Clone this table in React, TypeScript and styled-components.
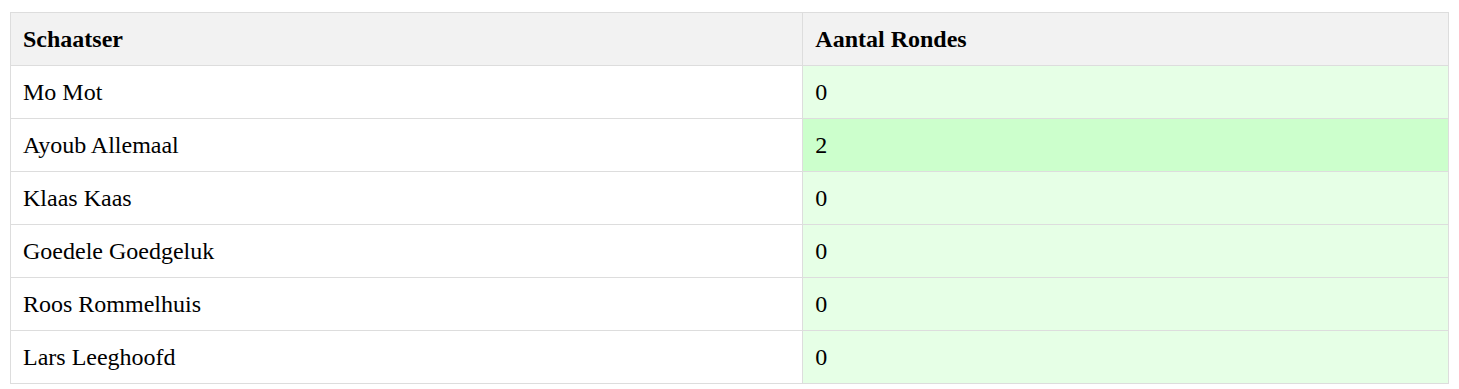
import React from "react";
import styled, { createGlobalStyle } from "styled-components";

const Global = createGlobalStyle`
  html, body { margin: 0; padding: 0; background: #ffffff; }
  body {
    padding: 12px 10px;
    font-family: "Liberation Serif", "Times New Roman", serif;
    color: #000;
  }
`;

const Table = styled.table`
  width: 100%;
  border-collapse: collapse;
  font-size: 24px;
  line-height: 28px;
`;

const HeadCell = styled.th`
  text-align: left;
  font-weight: bold;
  background: #f2f2f2;
  border: 1px solid #dddddd;
  padding: 12px;
  &:first-child { width: 55.1%; }
`;

const Cell = styled.td<{ $tint?: string }>`
  border: 1px solid #dddddd;
  padding: 12px;
  background: ${(p) => p.$tint ?? "#ffffff"};
`;

const data = [
  { name: "Mo Mot", rounds: 0 },
  { name: "Ayoub Allemaal", rounds: 2 },
  { name: "Klaas Kaas", rounds: 0 },
  { name: "Goedele Goedgeluk", rounds: 0 },
  { name: "Roos Rommelhuis", rounds: 0 },
  { name: "Lars Leeghoofd", rounds: 0 },
];

const tint = (r: number) => (r > 0 ? "#ccffcc" : "#e6ffe6");

export default function App() {
  return (
    <>
      <Global />
      <Table>
        <thead>
          <tr>
            <HeadCell>Schaatser</HeadCell>
            <HeadCell>Aantal Rondes</HeadCell>
          </tr>
        </thead>
        <tbody>
          {data.map((d) => (
            <tr key={d.name}>
              <Cell>{d.name}</Cell>
              <Cell $tint={tint(d.rounds)}>{d.rounds}</Cell>
            </tr>
          ))}
        </tbody>
      </Table>
    </>
  );
}
